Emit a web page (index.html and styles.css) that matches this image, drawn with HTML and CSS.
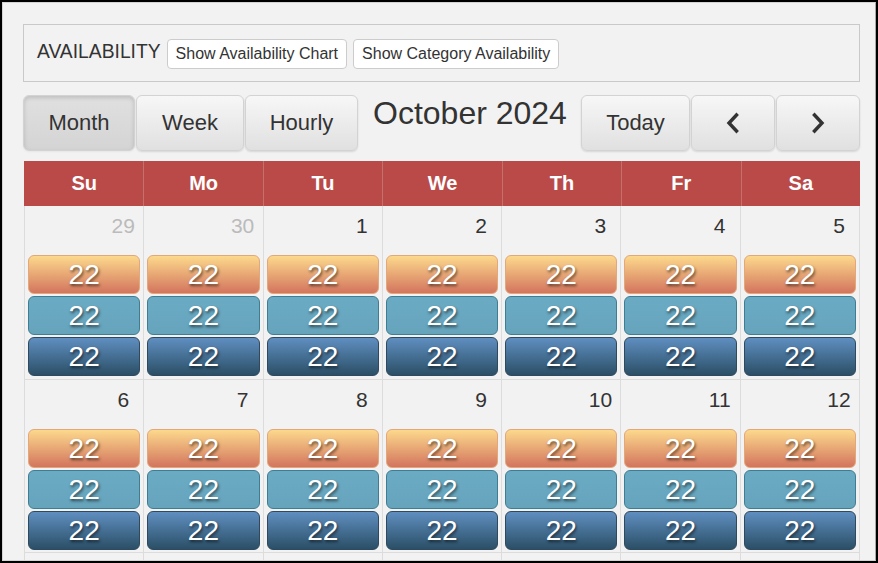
FILE: index.html
```html
<!DOCTYPE html>
<html>
<head>
<meta charset="utf-8">
<link rel="stylesheet" href="styles.css">
</head>
<body>
<div class="frame">
  <div class="page">
    <div class="avail">
      <span class="avail-label">AVAILABILITY</span>
      <button class="small-btn">Show Availability Chart</button>
      <button class="small-btn">Show Category Availability</button>
    </div>
    <div class="toolbar">
      <div class="btn-group">
        <button class="tb-btn active w-month">Month</button>
        <button class="tb-btn w-week">Week</button>
        <button class="tb-btn w-hourly">Hourly</button>
      </div>
      <h2 class="title">October 2024</h2>
      <div class="btn-group right">
        <button class="tb-btn w-today">Today</button>
        <button class="tb-btn w-arrow" aria-label="Previous">
          <svg width="16" height="22" viewBox="0 0 16 22"><polyline points="11.5,3 4,11 11.5,19" fill="none" stroke="#333" stroke-width="3.4" stroke-linecap="square" stroke-linejoin="miter"/></svg>
        </button>
        <button class="tb-btn w-arrow" aria-label="Next">
          <svg width="16" height="22" viewBox="0 0 16 22"><polyline points="4.5,3 12,11 4.5,19" fill="none" stroke="#333" stroke-width="3.4" stroke-linecap="square" stroke-linejoin="miter"/></svg>
        </button>
      </div>
    </div>
    <div class="cal">
      <div class="head">Su</div><div class="head">Mo</div><div class="head">Tu</div><div class="head">We</div><div class="head">Th</div><div class="head">Fr</div><div class="head">Sa</div>
    </div>
    <div class="cal body" id="cal"></div>
  </div>
</div>
<script src="app.js"></script>
</body>
</html>
```
FILE: app.js
```js
(function () {
  var weeks = [
    [[29, 1], [30, 1], [1], [2], [3], [4], [5]],
    [[6], [7], [8], [9], [10], [11], [12]],
    [[13], [14], [15], [16], [17], [18], [19]]
  ];
  var cal = document.getElementById('cal');
  var html = '';
  weeks.forEach(function (w) {
    w.forEach(function (d) {
      html += '<div class="cell"><div class="date' + (d[1] ? ' other' : '') + '"><span class="num">' + d[0] + '</span></div>' +
        '<div class="badge orange">22</div>' +
        '<div class="badge teal">22</div>' +
        '<div class="badge navy">22</div></div>';
    });
  });
  cal.innerHTML = html;
})();
```
FILE: styles.css
```css
* { box-sizing: border-box; }
html, body { margin: 0; padding: 0; }
body {
  font-family: "Liberation Sans", Arial, Helvetica, sans-serif;
  color: #333;
  background: #000;
}
.frame {
  width: 878px;
  height: 563px;
  border: 2px solid #000;
  overflow: hidden;
}
.page {
  height: 100%;
  background: #f2f2f2;
  border: 1px solid #d4d4d4;
  border-right-color: #a9a9a9;
  padding: 21px 15px 0 20px;
  overflow: hidden;
}
.avail {
  height: 58px;
  border: 1px solid #c9c9c9;
  display: flex;
  align-items: center;
  padding: 0 13px;
  gap: 6px;
}
.avail-label {
  font-size: 19.3px;
  position: relative;
  top: -1px;
}
.small-btn {
  font-family: inherit;
  font-size: 16px;
  color: #333;
  background: #fff;
  border: 1px solid #ccc;
  border-radius: 4px;
  height: 30px;
  padding: 0 8px;
  position: relative;
  top: 1px;
}
.toolbar {
  margin-top: 13px;
  display: flex;
  align-items: flex-start;
  height: 56px;
}
.btn-group { display: flex; }
.btn-group.right { margin-left: auto; }
.tb-btn {
  font-family: inherit;
  font-size: 22px;
  color: #333;
  height: 56px;
  border: 1px solid #d3d3d3;
  border-radius: 6px;
  background: linear-gradient(#f7f7f7, #e0e0e0);
  box-shadow: 0 1px 2px rgba(0,0,0,0.12);
  padding: 0;
  display: flex;
  align-items: center;
  justify-content: center;
  margin-right: 1px;
}
.tb-btn.active {
  background: linear-gradient(#e0e0e0, #d4d4d4);
  box-shadow: inset 0 2px 4px rgba(0,0,0,0.15), 0 1px 2px rgba(0,0,0,0.05);
}
.btn-group .tb-btn:last-child { margin-right: 0; }
.w-month { width: 112px; }
.w-week { width: 108px; }
.w-hourly { width: 113px; }
.w-today { width: 109px; }
.w-arrow { width: 84px; }
.title {
  margin: 0 0 0 15px;
  font-size: 32px;
  font-weight: normal;
  line-height: 36px;
  color: #333;
}
.cal {
  display: grid;
  grid-template-columns: repeat(7, 1fr);
  width: 836px;
  margin-left: 1px;
}
.toolbar + .cal { margin-top: 10px; }
.head {
  height: 45px;
  background: #b94a48;
  color: #fff;
  font-weight: bold;
  font-size: 20px;
  display: flex;
  align-items: center;
  justify-content: center;
  border-left: 1px solid #c4706d;
}
.head:first-child { border-left-color: #b94a48; }
.body { border-left: 1px solid #dcdcdc; }
.cell {
  height: 174px;
  border-right: 1px solid #dcdcdc;
  border-bottom: 1px solid #dcdcdc;
  padding: 0 3px;
}
.cell:nth-child(n+8) { height: 173px; }
.date {
  height: 49px;
  padding-top: 8px;
  line-height: 24px;
  font-size: 21px;
  display: flex;
  justify-content: flex-end;
  color: #333;
}
.num {
  width: 30px;
  margin-right: 2px;
  text-align: center;
}
.date.other { color: #bbb; }
.badge {
  height: 39px;
  border-radius: 6px;
  border: 1px solid;
  margin-bottom: 2px;
  color: #fff;
  font-size: 28px;
  line-height: 37px;
  text-align: center;
  text-shadow: 1px 2px 3px rgba(0,0,0,0.6);
}
.orange {
  background: linear-gradient(#fcd98c, #d3755e);
  border-color: #e2a77a;
}
.teal {
  background: linear-gradient(#6aabc3, #66a4bc);
  border-color: #3f7d92;
}
.navy {
  background: linear-gradient(#5f8ec0, #2b4f66);
  border-color: #2f4a5e;
}
```
